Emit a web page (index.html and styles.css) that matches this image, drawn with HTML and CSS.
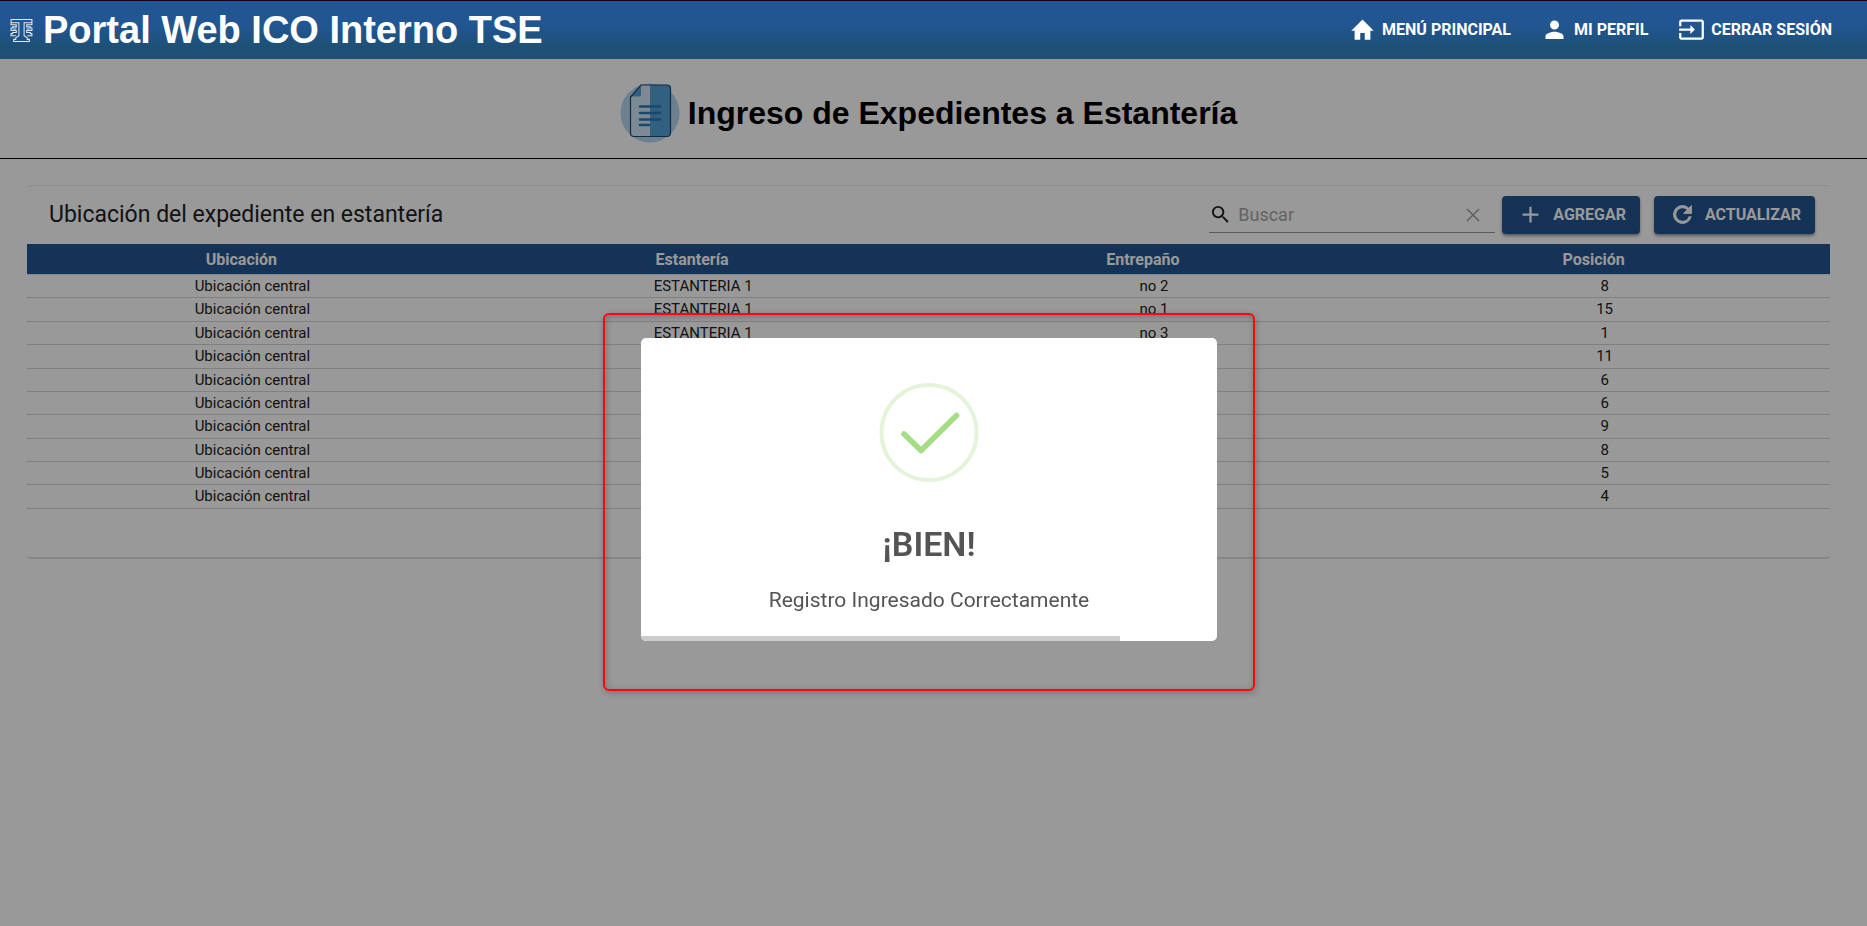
FILE: index.html
```html
<!DOCTYPE html>
<html lang="es">
<head>
<meta charset="utf-8">
<title>Portal Web ICO Interno TSE</title>
<link rel="stylesheet" href="styles.css">
</head>
<body>
<header class="topbar">
  <div class="brand">
    <svg class="brand-logo" viewBox="0 0 22 24" aria-hidden="true"><path d="M1 1.500h20v3h-7.500v12.500l3 2v1.500h2v2h-15v-2h2V19l3-2V4.500H1z M1 4.500v2h5v2H2.500v1H1v2.500h5v2H2.500v1H1v2h4.500 M21 4.500v2h-5v2h3.500v1H21v2.500h-5v2h3.500v1H21v2h-4.500 M3 10.500h3M16 10.500h3"/></svg>
    <span class="brand-name">Portal Web ICO Interno TSE</span>
  </div>
  <nav class="menu">
    <a href="#menu" class="menu-link"><svg viewBox="0 0 24 24" aria-hidden="true"><path d="M10 21v-6h4v6h5v-8h3L12 3 2 13h3v8z"/></svg>MENÚ PRINCIPAL</a>
    <a href="#perfil" class="menu-link"><svg viewBox="0 0 24 24" aria-hidden="true"><path d="M12 12c2.210 0 4-1.790 4-4s-1.790-4-4-4-4 1.790-4 4 1.790 4 4 4zm0 2c-2.670 0-8 1.340-8 4v2.500h16V18c0-2.660-5.330-4-8-4z"/></svg>MI PERFIL</a>
    <a href="#salir" class="menu-link"><svg viewBox="0 0 24 24" aria-hidden="true"><path d="M21 3H3c-1.100 0-2 .9-2 2v4h2V5h18v14H3v-4H1v4c0 1.100.9 2 2 2h18c1.100 0 2-.9 2-2V5c0-1.100-.9-2-2-2zM11 16l4-4-4-4v3H1v2h10z"/></svg>CERRAR SESIÓN</a>
  </nav>
</header>

<main>
  <div class="page-head">
    <svg class="page-icon" viewBox="0 0 60 60" aria-hidden="true">
      <circle cx="30" cy="30" r="29.500" fill="#b4d5ee"/>
      <path d="M10 14 21 2h10v51H14q-4 0-4-4z" fill="#d0e7f7"/>
      <path d="M30 2h17q4 0 4 4v43q0 4-4 4H30z" fill="#52a0d6"/>
      <path d="M11 13.500 21 2.500v9q0 2-2 2z" fill="#52a0d6"/>
      <path d="M10.500 14 21 2h26q3.500 0 3.500 3.500V50q0 3.500-3.500 3.500H14q-3.500 0-3.500-3.500z" fill="none" stroke="#1d4673" stroke-width="1.200"/>
      <path d="M20 23.500h20M20 30h20M20 36.500h20M20 42h9" stroke="#2878b5" stroke-width="2.600" stroke-linecap="round"/>
    </svg>
    <h1>Ingreso de Expedientes a Estantería</h1>
  </div>

  <section class="card">
    <div class="toolbar">
      <h2>Ubicación del expediente en estantería</h2>
      <div class="search">
        <svg class="icon-search" viewBox="0 0 24 24" aria-hidden="true"><path d="M15.500 14h-.79l-.28-.27A6.471 6.471 0 0 0 16 9.500 6.500 6.500 0 1 0 9.500 16c1.610 0 3.090-.59 4.230-1.570l.27.28v.79l5 4.990L20.490 19l-4.990-5zm-6 0C7.010 14 5 11.990 5 9.500S7.010 5 9.500 5 14 7.010 14 9.500 11.990 14 9.500 14z"/></svg>
        <input type="text" placeholder="Buscar" aria-label="Buscar">
        <button type="button" class="clear" aria-label="Limpiar"><svg viewBox="0 0 14 14"><path d="M1 1l12 12M13 1L1 13"/></svg></button>
      </div>
      <button type="button" class="action"><svg viewBox="0 0 24 24" aria-hidden="true"><path d="M19 13h-6v6h-2v-6H5v-2h6V5h2v6h6z"/></svg>AGREGAR</button>
      <button type="button" class="action"><svg viewBox="0 0 24 24" aria-hidden="true"><path d="M17.650 6.350A7.958 7.958 0 0 0 12 4a8 8 0 1 0 7.730 10h-2.080A5.990 5.990 0 0 1 12 18a6 6 0 1 1 0-12c1.660 0 3.140.69 4.220 1.780L13 11h7V4z" stroke="currentColor" stroke-width=".8"/></svg>ACTUALIZAR</button>
    </div>
    <table class="grid">
      <thead><tr><th>Ubicación</th><th>Estantería</th><th>Entrepaño</th><th>Posición</th></tr></thead>
      <tbody>
        <tr><td>Ubicación central</td><td>ESTANTERIA 1</td><td>no 2</td><td>8</td></tr>
        <tr><td>Ubicación central</td><td>ESTANTERIA 1</td><td>no 1</td><td>15</td></tr>
        <tr><td>Ubicación central</td><td>ESTANTERIA 1</td><td>no 3</td><td>1</td></tr>
        <tr><td>Ubicación central</td><td></td><td></td><td>11</td></tr>
        <tr><td>Ubicación central</td><td></td><td></td><td>6</td></tr>
        <tr><td>Ubicación central</td><td></td><td></td><td>6</td></tr>
        <tr><td>Ubicación central</td><td></td><td></td><td>9</td></tr>
        <tr><td>Ubicación central</td><td></td><td></td><td>8</td></tr>
        <tr><td>Ubicación central</td><td></td><td></td><td>5</td></tr>
        <tr><td>Ubicación central</td><td></td><td></td><td>4</td></tr>
      </tbody>
    </table>
  </section>
</main>

<div class="overlay">
  <div class="highlight">
    <div class="dialog" role="dialog" aria-labelledby="dialog-title">
      <svg class="success" viewBox="0 0 99 99" aria-hidden="true">
        <circle cx="49" cy="49.500" r="47.500" stroke="#e4f4db" stroke-width="4"/>
        <path d="M24 51 41 67.500 76.500 32.500" stroke="#a5dc86" stroke-width="5.600" stroke-linecap="round" stroke-linejoin="round"/>
      </svg>
      <h2 id="dialog-title">¡BIEN!</h2>
      <p>Registro Ingresado Correctamente</p>
      <div class="timer"><div class="timer-fill" style="width:83.2%"></div></div>
    </div>
  </div>
</div>
</body>
</html>
```

FILE: styles.css
```css
* { box-sizing: border-box; }
body {
  margin: 0;
  min-height: 100vh;
  background: #fff;
  color: #212121;
  font-family: Roboto, sans-serif;
}
h1, h2, p { margin: 0; }
button, input { font: inherit; }

.topbar {
  position: relative;
  z-index: 2;
  display: flex;
  align-items: center;
  justify-content: space-between;
  height: 59px;
  padding: 0 35px 0 10px;
  border-top: 1px solid #14041f;
  background: linear-gradient(#215692 40%, #1e5076 80%);
  color: #fff;
}
.brand { display: flex; align-items: center; gap: 10px; }
.brand-logo {
  width: 23px;
  height: 25px;
  fill: none;
  stroke: #dfe8f1;
  stroke-width: 1;
}
.brand-name {
  font: bold 38px/48px "Liberation Sans", Arial, sans-serif;
}
.menu { display: flex; align-items: center; gap: 30px; padding-bottom: 2px; }
.menu-link {
  display: flex;
  align-items: center;
  gap: 6px;
  color: #fff;
  font-size: 16px;
  font-weight: 700;
  text-decoration: none;
}
.menu-link svg { width: 27px; height: 27px; fill: currentColor; }

.page-head {
  display: flex;
  align-items: center;
  justify-content: center;
  gap: 8px;
  height: 100px;
  padding: 8px 10px 0 0;
  border-bottom: 1px solid #000;
  color: #000;
}
.page-icon { width: 60px; height: 60px; }
.page-head h1 { font: bold 32px/40px "Liberation Sans", Arial, sans-serif; }

.card {
  min-height: 374px;
  margin: 26px 37px 0 27px;
  border-top: 1px solid #e9e9f0;
  border-bottom: 2px solid #dedee6;
  border-radius: 4px;
}
.toolbar {
  display: flex;
  align-items: center;
  height: 58px;
  padding: 0 15px 0 22px;
}
.toolbar h2 { flex: 1; padding-bottom: 2px; font-size: 23px; font-weight: 400; }
.search {
  display: flex;
  align-items: center;
  width: 286px;
  height: 35px;
  margin-right: 7px;
  border-bottom: 1px solid #949494;
}
.icon-search { width: 23px; height: 23px; fill: #212121; }
.search input {
  flex: 1;
  min-width: 0;
  margin-left: 6px;
  padding: 0;
  border: 0;
  background: none;
  font-size: 18px;
}
.search input::placeholder { color: #a6a6a6; opacity: 1; }
.clear {
  display: flex;
  width: 14px;
  height: 14px;
  margin-right: 15px;
  padding: 0;
  border: 0;
  background: none;
}
.clear svg { width: 14px; height: 14px; stroke: #a0a0a0; stroke-width: 1.500; }
.action {
  display: flex;
  align-items: center;
  gap: 9px;
  height: 38px;
  padding: 0 14px 1px 15px;
  border: 0;
  border-radius: 4px;
  background: #225690;
  color: #fff;
  font-size: 16px;
  font-weight: 700;
  box-shadow: 0 2px 3px rgba(0, 0, 0, .4);
}
.action + .action { margin-left: 14px; }
.action svg { width: 27px; height: 27px; fill: currentColor; }

.grid {
  width: 100%;
  table-layout: fixed;
  border-collapse: separate;
  border-spacing: 0;
  text-align: center;
}
.grid th {
  height: 31px;
  padding: 0 22px 0 0;
  border-bottom: 1px solid #e0e0e0;
  background: #225690;
  background-clip: padding-box;
  color: #fff;
  font-size: 16px;
  font-weight: 700;
}
.grid td {
  height: 23px;
  padding: 0 0 1px;
  border-bottom: 1px solid #d6d6d6;
  font-size: 15px;
  line-height: 20px;
}
.grid tr:nth-child(2) td,
.grid tr:nth-child(4) td,
.grid tr:nth-child(7) td,
.grid tr:nth-child(10) td { height: 24px; }

.overlay {
  position: fixed;
  inset: 0;
  z-index: 1;
  display: flex;
  align-items: flex-start;
  justify-content: center;
  padding: 313px 9px 0 0;
  background: rgba(0, 0, 0, .4);
}
.highlight {
  padding: 23px 36px 48px;
  border: 2px solid #f80808;
  border-radius: 6px;
  box-shadow: 1px 2px 7px rgba(0, 0, 0, .25), inset 1px 2px 7px rgba(0, 0, 0, .25);
}
.dialog {
  display: flex;
  flex-direction: column;
  align-items: center;
  width: 576px;
  overflow: hidden;
  border-radius: 5px;
  background: #fff;
  color: #545454;
}
.success { width: 99px; height: 99px; margin-top: 45px; fill: none; overflow: visible; }
.dialog h2 { margin-top: 41px; font-size: 34px; line-height: 42px; font-weight: 600; }
.dialog p { margin: 22px 0 23px; font-size: 21px; line-height: 26px; }
.timer { align-self: stretch; height: 5px; }
.timer-fill { height: 5px; background: #ccc; }
```
